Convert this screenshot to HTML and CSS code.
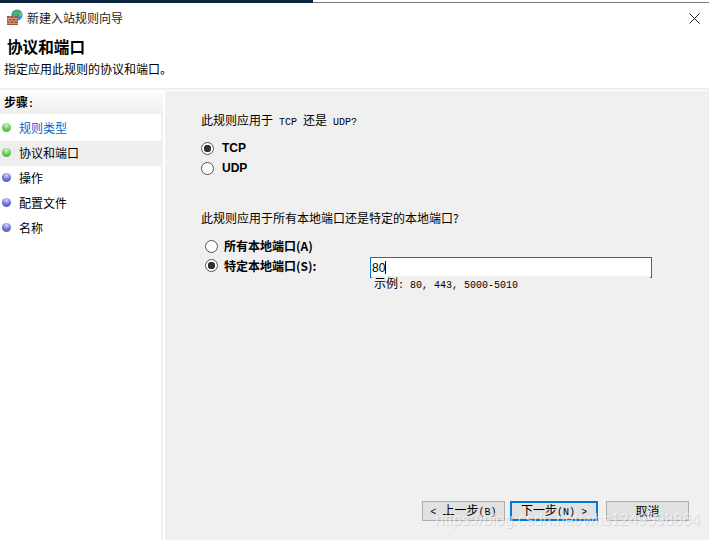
FILE: index.html
```html
<!DOCTYPE html>
<html lang="zh-CN">
<head>
  <meta charset="UTF-8" />
  <title>新建入站规则向导</title>
  <link rel="stylesheet" href="styles.css">
</head>
<body>
  <div class="topbar">
    <div class="topbar-dark"></div>
    <div class="topbar-line"></div>
  </div>

  <div class="titlebar">
    <svg class="app-icon" width="20" height="20" viewBox="0 0 20 20">
      <circle cx="11" cy="7" r="5.6" fill="#2f8fd8"/>
      <path d="M8 3 L12 2 L14 5 L11 7 L12 10 L9 10 L7 6 Z" fill="#4fb84a"/>
      <path d="M14 3.5 L16 6 L15 9 L13.5 7 Z" fill="#7fd06a"/>
      <rect x="1" y="8" width="11" height="9" fill="#a5523a"/>
      <path d="M1 10.5 H12 M1 13 H12 M1 15.5 H12 M4 8 V10.5 M8 8 V10.5 M2.5 10.5 V13 M6 10.5 V13 M10 10.5 V13 M4 13 V15.5 M8 13 V15.5" stroke="#d9a48f" stroke-width="0.8" fill="none"/>
    </svg>
    <span class="title-text">新建入站规则向导</span>
    <svg class="close-icon" width="11" height="11" viewBox="0 0 11 11">
      <path d="M0.5 0.5 L10.5 10.5 M10.5 0.5 L0.5 10.5" stroke="#222" stroke-width="1" fill="none"/>
    </svg>
  </div>

  <h1 class="page-title">协议和端口</h1>
  <p class="page-desc">指定应用此规则的协议和端口。</p>
  <div class="divider"></div>

  <div class="content">
    <aside class="steps">
      <div class="steps-head">步骤<span class="lat">:</span></div>
      <ul class="steps-list">
        <li class="step done link"><i class="dot green"></i>规则类型</li>
        <li class="step done current"><i class="dot green"></i>协议和端口</li>
        <li class="step"><i class="dot blue"></i>操作</li>
        <li class="step"><i class="dot blue"></i>配置文件</li>
        <li class="step"><i class="dot blue"></i>名称</li>
      </ul>
    </aside>

    <main class="main">
      <p class="question q1">此规则应用于<span class="lat"> TCP </span>还是<span class="lat"> UDP?</span></p>
      <div class="group group-proto">
        <div class="radio-row"><i class="radio checked"></i><b>TCP</b></div>
        <div class="radio-row"><i class="radio"></i><b>UDP</b></div>
      </div>

      <p class="question q2">此规则应用于所有本地端口还是特定的本地端口?</p>
      <div class="group group-port">
        <div class="radio-row"><i class="radio"></i><b>所有本地端口(A)</b></div>
        <div class="radio-row port-row">
          <i class="radio checked"></i><b class="port-label">特定本地端口(S):</b>
          <div class="port-field">
            <div class="port-input">80<span class="caret"></span></div>
            <div class="port-hint">示例<span class="lat">: 80, 443, 5000-5010</span></div>
          </div>
        </div>
      </div>

      <div class="buttons">
        <button class="btn"><span class="lat">&lt; </span>上一步<span class="lat">(B)</span></button>
        <button class="btn primary">下一步<span class="lat">(N) &gt;</span></button>
        <button class="btn cancel">取消</button>
      </div>
    </main>
  </div>

  <div class="watermark">https://blog.csdn.net/whs1249598864</div>
</body>
</html>
```

FILE: styles.css
```css
* {
  box-sizing: border-box;
}
html, body {
  height: 540px;
  margin: 0;
  overflow: hidden;
}
body {
  position: relative;
  display: flex;
  flex-direction: column;
  background: #fff;
  color: #000;
  font-family: "Noto Sans CJK SC", "Liberation Sans", sans-serif;
  font-size: 12px;
  line-height: 14px;
}
.lat {
  font-family: "Liberation Mono", monospace;
  font-size: 10px;
}

.topbar {
  display: flex;
  height: 3px;
}
.topbar-dark {
  width: 313px;
  background: #0a2540;
}
.topbar-line {
  flex: 1;
  border-bottom: 1px solid #777;
}

.titlebar {
  display: flex;
  align-items: center;
  height: 29px;
  padding: 0 9px 0 6px;
}
.app-icon {
  flex: none;
}
.title-text {
  margin-left: 1px;
  color: #222;
}
.close-icon {
  margin-left: auto;
  margin-top: 2px;
}

.page-title {
  margin: 5px 0 0 7px;
  font-size: 15.6px;
  line-height: 18px;
  font-weight: bold;
}
.page-desc {
  margin: 7px 0 0 4px;
}
.divider {
  height: 2px;
  margin-top: 12px;
  background: #eee;
}

.content {
  flex: 1;
  display: flex;
  margin-top: 1px;
}
.steps {
  width: 165px;
  padding-right: 2px;
  background: #fff;
}
.steps-head {
  height: 23px;
  padding: 4px 0 0 4px;
  font-weight: bold;
  background: linear-gradient(#fdfdfd, #eeeeee);
}
.steps-list {
  list-style: none;
  margin: 0;
  padding: 2px 0 0;
  border-right: 2px solid #f0f0f0;
  height: 426px;
}
.step {
  display: flex;
  align-items: center;
  height: 25px;
  padding-left: 2px;
  padding-bottom: 2px;
}
.step.link {
  color: #0066cc;
}
.step.current {
  background: #eee;
}
.dot {
  width: 9px;
  height: 9px;
  margin-right: 8px;
  border-radius: 50%;
}
.dot.green {
  background: radial-gradient(circle at 50% 25%, #d8f0d0 0, #5fc84a 55%, #46a838 100%);
}
.dot.blue {
  background: radial-gradient(circle at 50% 25%, #d5d5f2 0, #6c6cd0 55%, #5555b5 100%);
}

.main {
  flex: 1;
  display: flex;
  flex-direction: column;
  padding: 0 20px 19px 36px;
  background: #f0f0f0;
}
.question {
  margin: 0;
}
.q1 {
  margin-top: 22px;
}
.q2 {
  margin-top: 33px;
}
.group-proto {
  margin-top: 8px;
  font-family: "Liberation Sans", sans-serif;
}
.group-proto .radio {
  margin-right: 8px;
}
.group-port {
  margin-top: 11px;
  margin-left: 4px;
}
.radio-row {
  display: flex;
  align-items: center;
  height: 20px;
}
.radio {
  flex: none;
  width: 13px;
  height: 13px;
  margin-right: 6px;
  border: 1px solid #555;
  border-radius: 50%;
  background: #fff;
}
.radio.checked {
  background: radial-gradient(circle, #333 0, #333 3.5px, #fff 4px);
}
.port-row {
  align-items: flex-start;
}
.port-row .radio {
  margin-top: 3px;
}
.port-row .port-label {
  margin-top: 3px;
  width: 146px;
}
.port-field {
  width: 282px;
  margin-top: 1px;
}
.port-input {
  display: flex;
  align-items: center;
  height: 21px;
  padding-left: 1px;
  border: 1px solid #0078d7;
  background: #fff;
  font-family: "Liberation Sans", sans-serif;
}
.caret {
  width: 1px;
  height: 13px;
  background: #000;
}
.port-hint {
  position: relative;
  width: 278px;
  margin: -2px 0 0 2px;
  padding-left: 2px;
  background: #f0f0f0;
}

.buttons {
  display: flex;
  margin-top: auto;
  margin-left: 221px;
}
.btn {
  width: 83px;
  height: 20px;
  padding: 0;
  border: 1px solid #adadad;
  background: #e1e1e1;
  color: #000;
  font-family: inherit;
  font-size: 12px;
  line-height: 14px;
}
.btn.primary {
  width: 88px;
  margin-left: 5px;
  border: 2px solid #0078d7;
}
.btn.cancel {
  margin-left: 8px;
}

.watermark {
  position: absolute;
  left: 435px;
  top: 510px;
  font-family: "Liberation Sans", sans-serif;
  font-size: 16px;
  line-height: 20px;
  color: rgba(255, 255, 255, 0.62);
  text-shadow: 1px 1px 1px rgba(0, 0, 0, 0.12);
  white-space: nowrap;
}
```
